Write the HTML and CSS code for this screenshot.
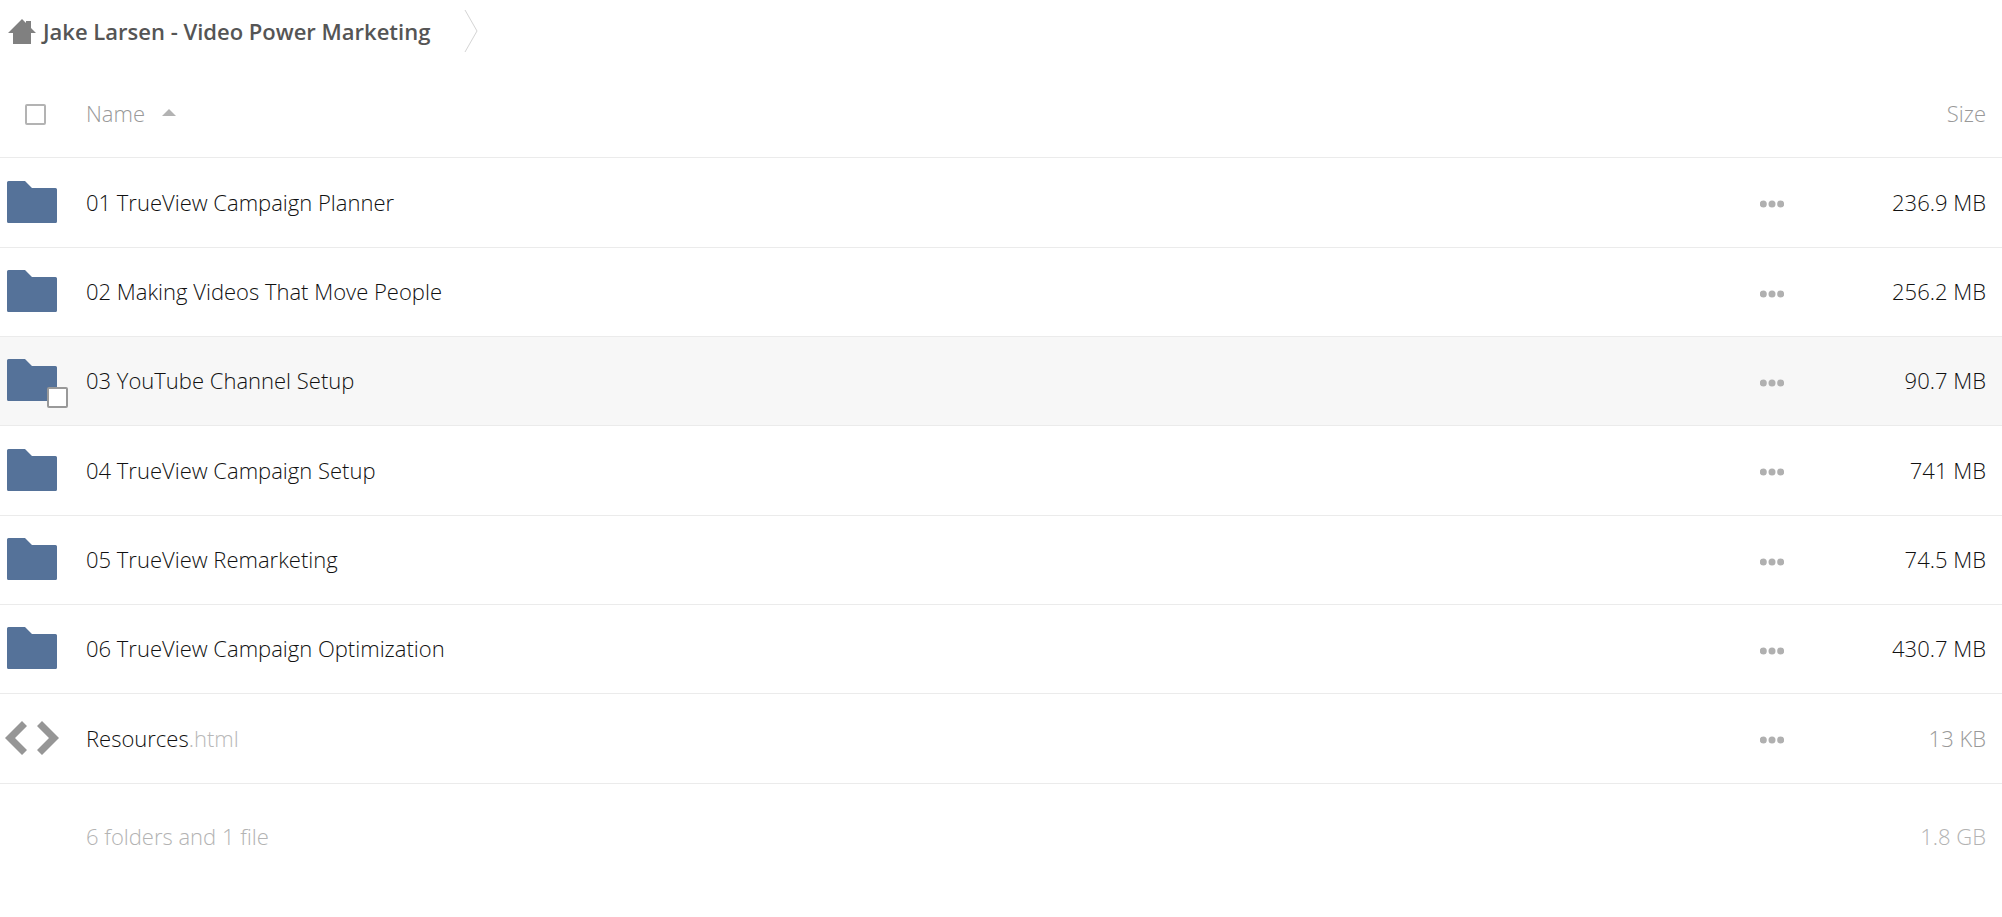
FILE: index.html
```html
<!DOCTYPE html>
<html lang="en">
<head>
    <meta charset="UTF-8">
    <meta name="viewport" content="width=device-width, initial-scale=1.0">
    <title>Jake Larsen - Video Power Marketing</title>
    <link rel="stylesheet" href="styles.css">
</head>
<body>
    <svg class="sprite" aria-hidden="true">
        <symbol id="folder" viewBox="0 0 50 42">
            <path d="M1.500 0H18L25 7H48.500Q50 7 50 8.500V40.500Q50 42 48.500 42H1.500Q0 42 0 40.500V1.500Q0 0 1.500 0Z"/>
        </symbol>
        <symbol id="dots" viewBox="0 0 24 8">
            <circle cx="3.300" cy="4" r="3.500"/><circle cx="12" cy="4" r="3.500"/><circle cx="20.700" cy="4" r="3.500"/>
        </symbol>
    </svg>

    <nav class="breadcrumb">
        <a href="#" class="crumb">
            <svg class="icon_home" viewBox="0 0 28 25" aria-hidden="true"><path d="M14 0L18 4V2H23V9L28 14H23V25H5V14H0Z"/></svg>
            <span>Jake Larsen - Video Power Marketing</span>
        </a>
        <svg class="crumb_arrow" viewBox="0 0 14 44" aria-hidden="true"><path d="M1 1L13 22L1 43"/></svg>
    </nav>

    <table class="file_list">
        <colgroup>
            <col class="col_icon">
            <col>
            <col class="col_menu">
            <col class="col_size">
        </colgroup>
        <thead>
            <tr>
                <th class="select_all"><input type="checkbox" class="check" aria-label="Select all"></th>
                <th class="name"><button type="button" class="btn_sort">Name<svg class="icon_sort" viewBox="0 0 14 7" aria-hidden="true"><path d="M7 0L14 7H0Z"/></svg></button></th>
                <th></th>
                <th class="size"><button type="button" class="btn_sort">Size</button></th>
            </tr>
        </thead>
        <tbody>
            <tr>
                <td class="thumb"><svg class="icon_folder" aria-hidden="true"><use href="#folder"/></svg></td>
                <td class="name"><a href="#">01 TrueView Campaign Planner</a></td>
                <td class="menu"><button type="button" class="btn_menu" aria-label="Actions"><svg class="icon_dots"><use href="#dots"/></svg></button></td>
                <td class="size">236.9 MB</td>
            </tr>
            <tr>
                <td class="thumb"><svg class="icon_folder" aria-hidden="true"><use href="#folder"/></svg></td>
                <td class="name"><a href="#">02 Making Videos That Move People</a></td>
                <td class="menu"><button type="button" class="btn_menu" aria-label="Actions"><svg class="icon_dots"><use href="#dots"/></svg></button></td>
                <td class="size">256.2 MB</td>
            </tr>
            <tr class="active">
                <td class="thumb"><svg class="icon_folder" aria-hidden="true"><use href="#folder"/></svg><input type="checkbox" class="check" aria-label="Select 03 YouTube Channel Setup"></td>
                <td class="name"><a href="#">03 YouTube Channel Setup</a></td>
                <td class="menu"><button type="button" class="btn_menu" aria-label="Actions"><svg class="icon_dots"><use href="#dots"/></svg></button></td>
                <td class="size">90.7 MB</td>
            </tr>
            <tr>
                <td class="thumb"><svg class="icon_folder" aria-hidden="true"><use href="#folder"/></svg></td>
                <td class="name"><a href="#">04 TrueView Campaign Setup</a></td>
                <td class="menu"><button type="button" class="btn_menu" aria-label="Actions"><svg class="icon_dots"><use href="#dots"/></svg></button></td>
                <td class="size">741 MB</td>
            </tr>
            <tr>
                <td class="thumb"><svg class="icon_folder" aria-hidden="true"><use href="#folder"/></svg></td>
                <td class="name"><a href="#">05 TrueView Remarketing</a></td>
                <td class="menu"><button type="button" class="btn_menu" aria-label="Actions"><svg class="icon_dots"><use href="#dots"/></svg></button></td>
                <td class="size">74.5 MB</td>
            </tr>
            <tr>
                <td class="thumb"><svg class="icon_folder" aria-hidden="true"><use href="#folder"/></svg></td>
                <td class="name"><a href="#">06 TrueView Campaign Optimization</a></td>
                <td class="menu"><button type="button" class="btn_menu" aria-label="Actions"><svg class="icon_dots"><use href="#dots"/></svg></button></td>
                <td class="size">430.7 MB</td>
            </tr>
            <tr>
                <td class="thumb file"><svg class="icon_code" viewBox="0 0 54 34" aria-hidden="true"><path d="M17 0L22 5L10 17L22 29L17 34L0 17ZM37 0L32 5L44 17L32 29L37 34L54 17Z"/></svg></td>
                <td class="name"><a href="#">Resources<span class="ext">.html</span></a></td>
                <td class="menu"><button type="button" class="btn_menu" aria-label="Actions"><svg class="icon_dots"><use href="#dots"/></svg></button></td>
                <td class="size small">13 KB</td>
            </tr>
        </tbody>
        <tfoot>
            <tr>
                <td></td>
                <td class="name">6 folders and 1 file</td>
                <td></td>
                <td class="size">1.8 GB</td>
            </tr>
        </tfoot>
    </table>
</body>
</html>
```
FILE: styles.css
```css
*{margin:0;padding:0;box-sizing:border-box;}
body{background-color:#fff;color:#111;font-family:"Open Sans","Noto Sans",sans-serif;font-size:22px;font-weight:300;line-height:32px;}
a{color:inherit;text-decoration:none;}
button{background:transparent;border:0;color:inherit;font:inherit;cursor:pointer;}
svg{display:block;}
.sprite{position:absolute;width:0;height:0;}

/* breadcrumb */
.breadcrumb{display:flex;align-items:center;gap:34px;height:68px;padding:0 8px 6px;}
.crumb{display:flex;align-items:center;gap:7px;color:#555;font-weight:600;}
.icon_home{width:28px;height:25px;fill:#808080;}
.crumb_arrow{width:14px;height:44px;fill:none;stroke:#d4d4d4;}

/* file list */
.file_list{width:100%;table-layout:fixed;border-collapse:separate;border-spacing:0;}
.col_icon{width:86px;}
.col_menu{width:100px;}
.col_size{width:180px;}
th,td{height:89px;padding-bottom:2px;border-bottom:1px solid #ebebeb;font-weight:300;text-align:left;vertical-align:middle;}
thead th,
tbody tr:nth-child(3n+1) td{height:90px;}
thead th{padding-bottom:0;color:#999;}
.size{padding-right:16px;text-align:right;}
.active td{background-color:#f7f7f7;}

.check{display:block;appearance:none;width:21px;height:21px;border:2px solid #b3b3b3;border-radius:2px;background-color:#fff;}
.select_all{padding:4px 0 0 25px;}
.btn_sort{display:inline-flex;align-items:center;gap:17px;}
.icon_sort{width:14px;height:7px;fill:#b3b3b3;}

.thumb{position:relative;padding-left:7px;}
.thumb.file{padding-left:5px;}
.thumb .check{position:absolute;left:47px;top:50px;border-color:#999;}
.icon_folder{width:50px;height:42px;fill:#557299;}
.icon_code{width:54px;height:34px;fill:#969696;}
.ext{color:#b8b8b8;}
.btn_menu{display:block;margin:0 auto;padding:12px 8px 7px;}
.icon_dots{width:24px;height:8px;fill:#b0b0b0;}
.small{color:#999;}

tfoot td{height:106px;border-bottom:0;color:#b3b3b3;}
```
